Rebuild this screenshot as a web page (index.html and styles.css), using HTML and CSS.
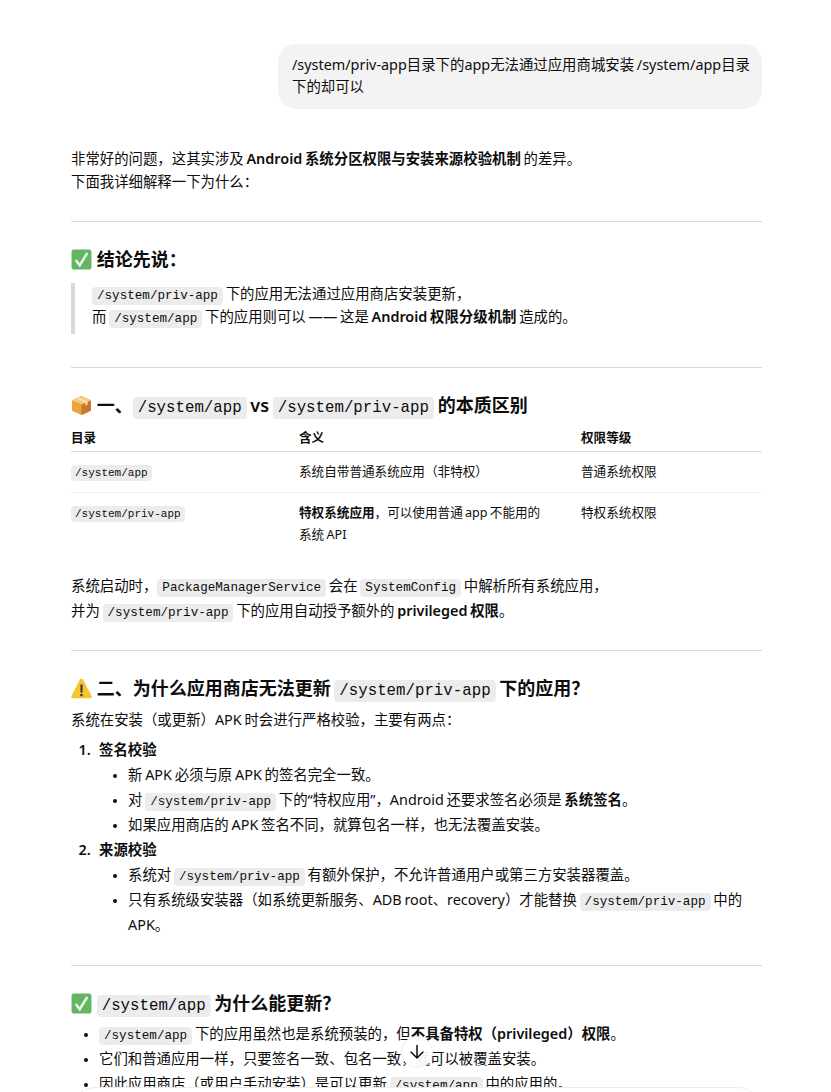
FILE: index.html
```html
<!DOCTYPE html>
<html lang="zh">
<head>
<meta charset="utf-8">
<title>Chat</title>
<link rel="stylesheet" href="styles.css">
</head>
<body>
<main class="thread">
  <div class="user-row"><div class="bubble">/system/priv-app目录下的app无法通过应用商城安装 /system/app目录下的却可以</div></div>
  <article class="answer">
    <p class="intro">非常好的问题，这其实涉及 <strong>Android 系统分区权限与安装来源校验机制</strong> 的差异。<br>下面我详细解释一下为什么：</p>
    <hr>
    <h3><svg class="emoji" viewBox="0 0 20 20"><use href="#check"/></svg> 结论先说：</h3>
    <blockquote><p><code>/system/priv-app</code> 下的应用无法通过应用商店安装更新，<br>而 <code>/system/app</code> 下的应用则可以 —— 这是 <strong>Android 权限分级机制</strong> 造成的。</p></blockquote>
    <hr>
    <h3><svg class="emoji" viewBox="0 0 20 20"><path d="M10 1 19 5V15L10 19 1 15V5Z" fill="#e8a33d"/><path d="M10 9 19 5V15L10 19Z" fill="#c9782a"/><path d="M10 1 19 5 10 9 1 5Z" fill="#f5c87a"/><path d="M5 3.2 13.8 7.1V10L15.8 9V6.2L7 2.3Z" fill="#fbe3b4"/></svg> 一、<code>/system/app</code> vs <code>/system/priv-app</code> 的本质区别</h3>
    <table>
      <thead><tr><th class="c1">目录</th><th class="c2">含义</th><th>权限等级</th></tr></thead>
      <tbody>
        <tr><td><code>/system/app</code></td><td>系统自带普通系统应用（非特权）</td><td>普通系统权限</td></tr>
        <tr><td><code>/system/priv-app</code></td><td><strong>特权系统应用</strong>，可以使用普通 app 不能用的系统 API</td><td>特权系统权限</td></tr>
      </tbody>
    </table>
    <p class="after-table">系统启动时，<code>PackageManagerService</code> 会在 <code>SystemConfig</code> 中解析所有系统应用，<br>并为 <code>/system/priv-app</code> 下的应用自动授予额外的 <strong>privileged 权限</strong>。</p>
    <hr>
    <h3><svg class="emoji" viewBox="0 0 20 20"><path d="M10 .6a1.7 1.7 0 0 1 1.5.9l8.1 15.6a1.4 1.4 0 0 1-1.2 2.1H1.6A1.4 1.4 0 0 1 .4 17.1L8.5 1.5A1.7 1.7 0 0 1 10 .6Z" fill="#f7c331"/><rect x="9" y="6" width="2" height="8" rx="1" fill="#3a3a3a"/><circle cx="10" cy="16.3" r="1.3" fill="#3a3a3a"/></svg> 二、为什么应用商店无法更新 <code>/system/priv-app</code> 下的应用？</h3>
    <p class="tight">系统在安装（或更新）APK 时会进行严格校验，主要有两点：</p>
    <ol>
      <li><strong>签名校验</strong>
        <ul>
          <li>新 APK 必须与原 APK 的签名完全一致。</li>
          <li>对 <code>/system/priv-app</code> 下的“特权应用”，Android 还要求签名必须是 <strong>系统签名</strong>。</li>
          <li>如果应用商店的 APK 签名不同，就算包名一样，也无法覆盖安装。</li>
        </ul>
      </li>
      <li><strong>来源校验</strong>
        <ul>
          <li>系统对 <code>/system/priv-app</code> 有额外保护，不允许普通用户或第三方安装器覆盖。</li>
          <li>只有系统级安装器（如系统更新服务、ADB root、recovery）才能替换 <code>/system/priv-app</code> 中的 APK。</li>
        </ul>
      </li>
    </ol>
    <hr>
    <h3><svg class="emoji" viewBox="0 0 20 20"><use href="#check"/></svg> <code>/system/app</code> 为什么能更新？</h3>
    <ul class="top-list">
      <li><code>/system/app</code> 下的应用虽然也是系统预装的，但<strong>不具备特权（privileged）权限</strong>。</li>
      <li>它们和普通应用一样，只要签名一致、包名一致，就可以被覆盖安装。</li>
      <li>因此应用商店（或用户手动安装）是可以更新 <code>/system/app</code> 中的应用的。</li>
    </ul>
  </article>
</main>
<button class="scroll-btn" type="button" aria-label="滚动到底部"><svg viewBox="0 0 20 20" width="20" height="20"><path d="M10 3.5V16M4 10 10 16l6-6" fill="none" stroke="#0d0d0d" stroke-width="1.5" stroke-linecap="round" stroke-linejoin="round"/></svg></button>
<div class="composer"></div>
<svg class="defs" width="0" height="0"><defs><g id="check"><rect x="0.5" y="0.5" width="19" height="19" rx="2.2" fill="#63b562"/><path d="M4.5 10.5 8.3 15.5 15.5 3.8" fill="none" stroke="#e9f6e6" stroke-width="2.4"/></g></defs></svg>
</body>
</html>
```
FILE: styles.css
```css
* { box-sizing: border-box; }
html, body { margin: 0; height: 1092px; overflow: hidden; background: #fff; }
body {
  position: relative;
  font-family: "Noto Sans", "Noto Sans CJK SC", sans-serif;
  font-size: 14.4px;
  line-height: 23px;
  word-spacing: -1px;
  color: #0d0d0d;
}
.thread { padding: 44px 69px 0 71px; }
.user-row { display: flex; justify-content: flex-end; margin-bottom: 38px; }
.bubble { width: 484px; padding: 10px 8px 11px 14px; line-height: 22px; background: #f3f3f3; border-radius: 18px; }
p { margin: 0; }
.intro { margin-bottom: 28px; }
hr { border: 0; border-top: 1px solid #d9d9d9; margin: 26px 0 24px; }
h3 { margin: 0 0 8px; font-size: 18px; line-height: 26px; font-weight: 600; }
strong { font-weight: 600; }
.emoji { width: 21px; height: 21px; margin-right: 1px; vertical-align: -4px; }
code {
  font-family: "Liberation Mono", monospace;
  font-size: 12.6px;
  font-weight: 400;
  line-height: 1;
  background: #ececec;
  border-radius: 4px;
  padding: 2px 5px;
}
h3 code { font-size: 15.75px; }
blockquote { display: flow-root; margin: 11px 0 33px; padding: 0 0 6px 17px; border-left: 4px solid #d9d9d9; }
blockquote p { line-height: 23px; margin-top: -1px; }
table { width: 100%; margin-top: 9px; border-collapse: collapse; font-size: 12.6px; line-height: 22px; }
th { text-align: left; font-weight: 600; padding: 0 0 2px; border-bottom: 1px solid #dcdcdc; }
td { vertical-align: top; padding: 9px 30px 9px 0; border-bottom: 1px solid #f0f0f0; }
tbody tr:last-child td { border-bottom: 0; }
.c1 { width: 228px; }
.c2 { width: 282px; }
td code { font-size: 11px; padding: 2px 4px; }
.after-table { margin: 18px 0 27px; line-height: 25px; }
.tight { line-height: 25px; margin: -2px 0 5px; }
ol, ul { margin: 0; padding: 0; }
ol { padding-left: 28px; margin-bottom: 28px; }
ol > li { line-height: 25px; }
ol > li::marker { font-weight: 600; content: counter(list-item) ".\00a0\00a0\00a0"; }
ol ul { padding-left: 29px; list-style: disc; margin-bottom: 0; }
ul li::marker { font-size: 12px; }
.top-list { padding-left: 28px; margin-top: -3px; }
.top-list li { line-height: 25px; }
.scroll-btn {
  position: absolute;
  left: 401px;
  top: 1036px;
  width: 32px;
  height: 32px;
  padding: 0;
  display: flex;
  align-items: center;
  justify-content: center;
  background: rgba(255,255,255,.92);
  border: 1px solid #efefef;
  border-radius: 50%;
}
.composer {
  position: absolute;
  left: 71px;
  top: 1087px;
  width: 691px;
  height: 60px;
  background: #fff;
  border: 1px solid #ececec;
  border-radius: 24px;
}
.defs { position: absolute; }
```
